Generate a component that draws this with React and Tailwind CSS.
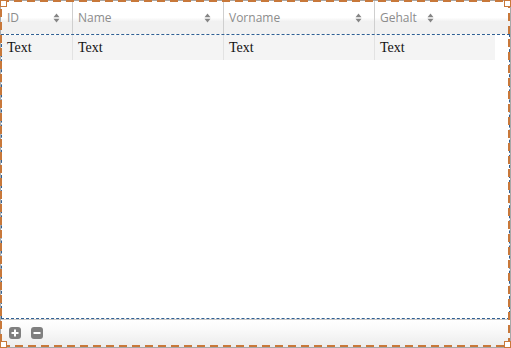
import React from "react";

function SortIcon() {
  return (
    <svg width="7" height="10" viewBox="0 0 7 10" className="shrink-0">
      <path d="M3.5 0.5 L6.5 4.2 L0.5 4.2 Z" fill="#858585" />
      <path d="M3.5 9.5 L6.5 5.8 L0.5 5.8 Z" fill="#858585" />
    </svg>
  );
}

function Corner({ pos }) {
  return (
    <div
      className={`absolute w-[7px] h-[7px] border border-[#c8783a] bg-white ${pos}`}
    />
  );
}

export default function App() {
  const headFont = { fontFamily: '"Open Sans", "Noto Sans", sans-serif' };
  const bodyFont = { fontFamily: '"Liberation Serif", "Times New Roman", serif' };
  return (
    <div className="relative w-[511px] h-[348px] bg-white border border-[#a8a8a8] flex flex-col">
      {/* header */}
      <div
        className="h-[33px] flex shrink-0 bg-[linear-gradient(to_bottom,#ffffff_0%,#ffffff_50%,#f1f1f1_62%,#f1f1f1_100%)] text-[12px] text-[#8c8c8c]"
        style={headFont}
      >
        <div className="w-[72px] border-r border-[#cfcfcf] flex items-center justify-between pl-[6px] pr-[12px]">
          <span>ID</span>
          <SortIcon />
        </div>
        <div className="w-[151px] border-r border-[#cfcfcf] flex items-center justify-between pl-[5px] pr-[12px]">
          <span>Name</span>
          <SortIcon />
        </div>
        <div className="w-[151px] border-r border-[#cfcfcf] flex items-center justify-between pl-[5px] pr-[12px]">
          <span>Vorname</span>
          <SortIcon />
        </div>
        <div className="flex-1 flex items-center gap-[10px] pl-[5px]">
          <span>Gehalt</span>
          <SortIcon />
        </div>
      </div>

      {/* body */}
      <div className="h-[285px] shrink-0 border border-dashed border-[#2f5f93]">
        <div
          className="w-[493px] h-[25px] bg-[#f4f4f4] flex text-[14px] text-[#111]"
          style={bodyFont}
        >
          <div className="w-[71px] border-r border-[#e2e2e2] flex items-center pl-[5px]">Text</div>
          <div className="w-[151px] border-r border-[#e2e2e2] flex items-center pl-[5px]">Text</div>
          <div className="w-[151px] border-r border-[#e2e2e2] flex items-center pl-[5px]">Text</div>
          <div className="flex-1 flex items-center pl-[5px]">Text</div>
        </div>
      </div>

      {/* footer */}
      <div className="flex-1 border-t border-[#c8c8c8] bg-[linear-gradient(to_bottom,#ffffff_0%,#fbfbfb_30%,#ececec_100%)] flex items-start gap-[10px] pl-[8px] pt-[7px]">
        <div className="w-[12px] h-[12px] rounded-[3px] bg-[#7f7f7f] flex items-center justify-center">
          <svg width="8" height="8" viewBox="0 0 8 8">
            <rect x="3" y="0.5" width="2" height="7" fill="#fff" />
            <rect x="0.5" y="3" width="7" height="2" fill="#fff" />
          </svg>
        </div>
        <div className="w-[12px] h-[12px] rounded-[3px] bg-[#7f7f7f] flex items-center justify-center">
          <svg width="8" height="8" viewBox="0 0 8 8">
            <rect x="0.5" y="3" width="7" height="2" fill="#fff" />
          </svg>
        </div>
      </div>

      {/* selection overlay */}
      <svg
        className="absolute -top-px -left-px pointer-events-none"
        width="511"
        height="348"
        viewBox="0 0 511 348"
      >
        <rect
          x="1"
          y="1"
          width="508"
          height="345"
          fill="none"
          stroke="#c8783a"
          strokeWidth="2"
          strokeDasharray="8 5"
        />
      </svg>
      <Corner pos="-top-px -left-px" />
      <Corner pos="-top-px -right-px" />
      <Corner pos="-bottom-px -left-px" />
      <Corner pos="-bottom-px -right-px" />
    </div>
  );
}
